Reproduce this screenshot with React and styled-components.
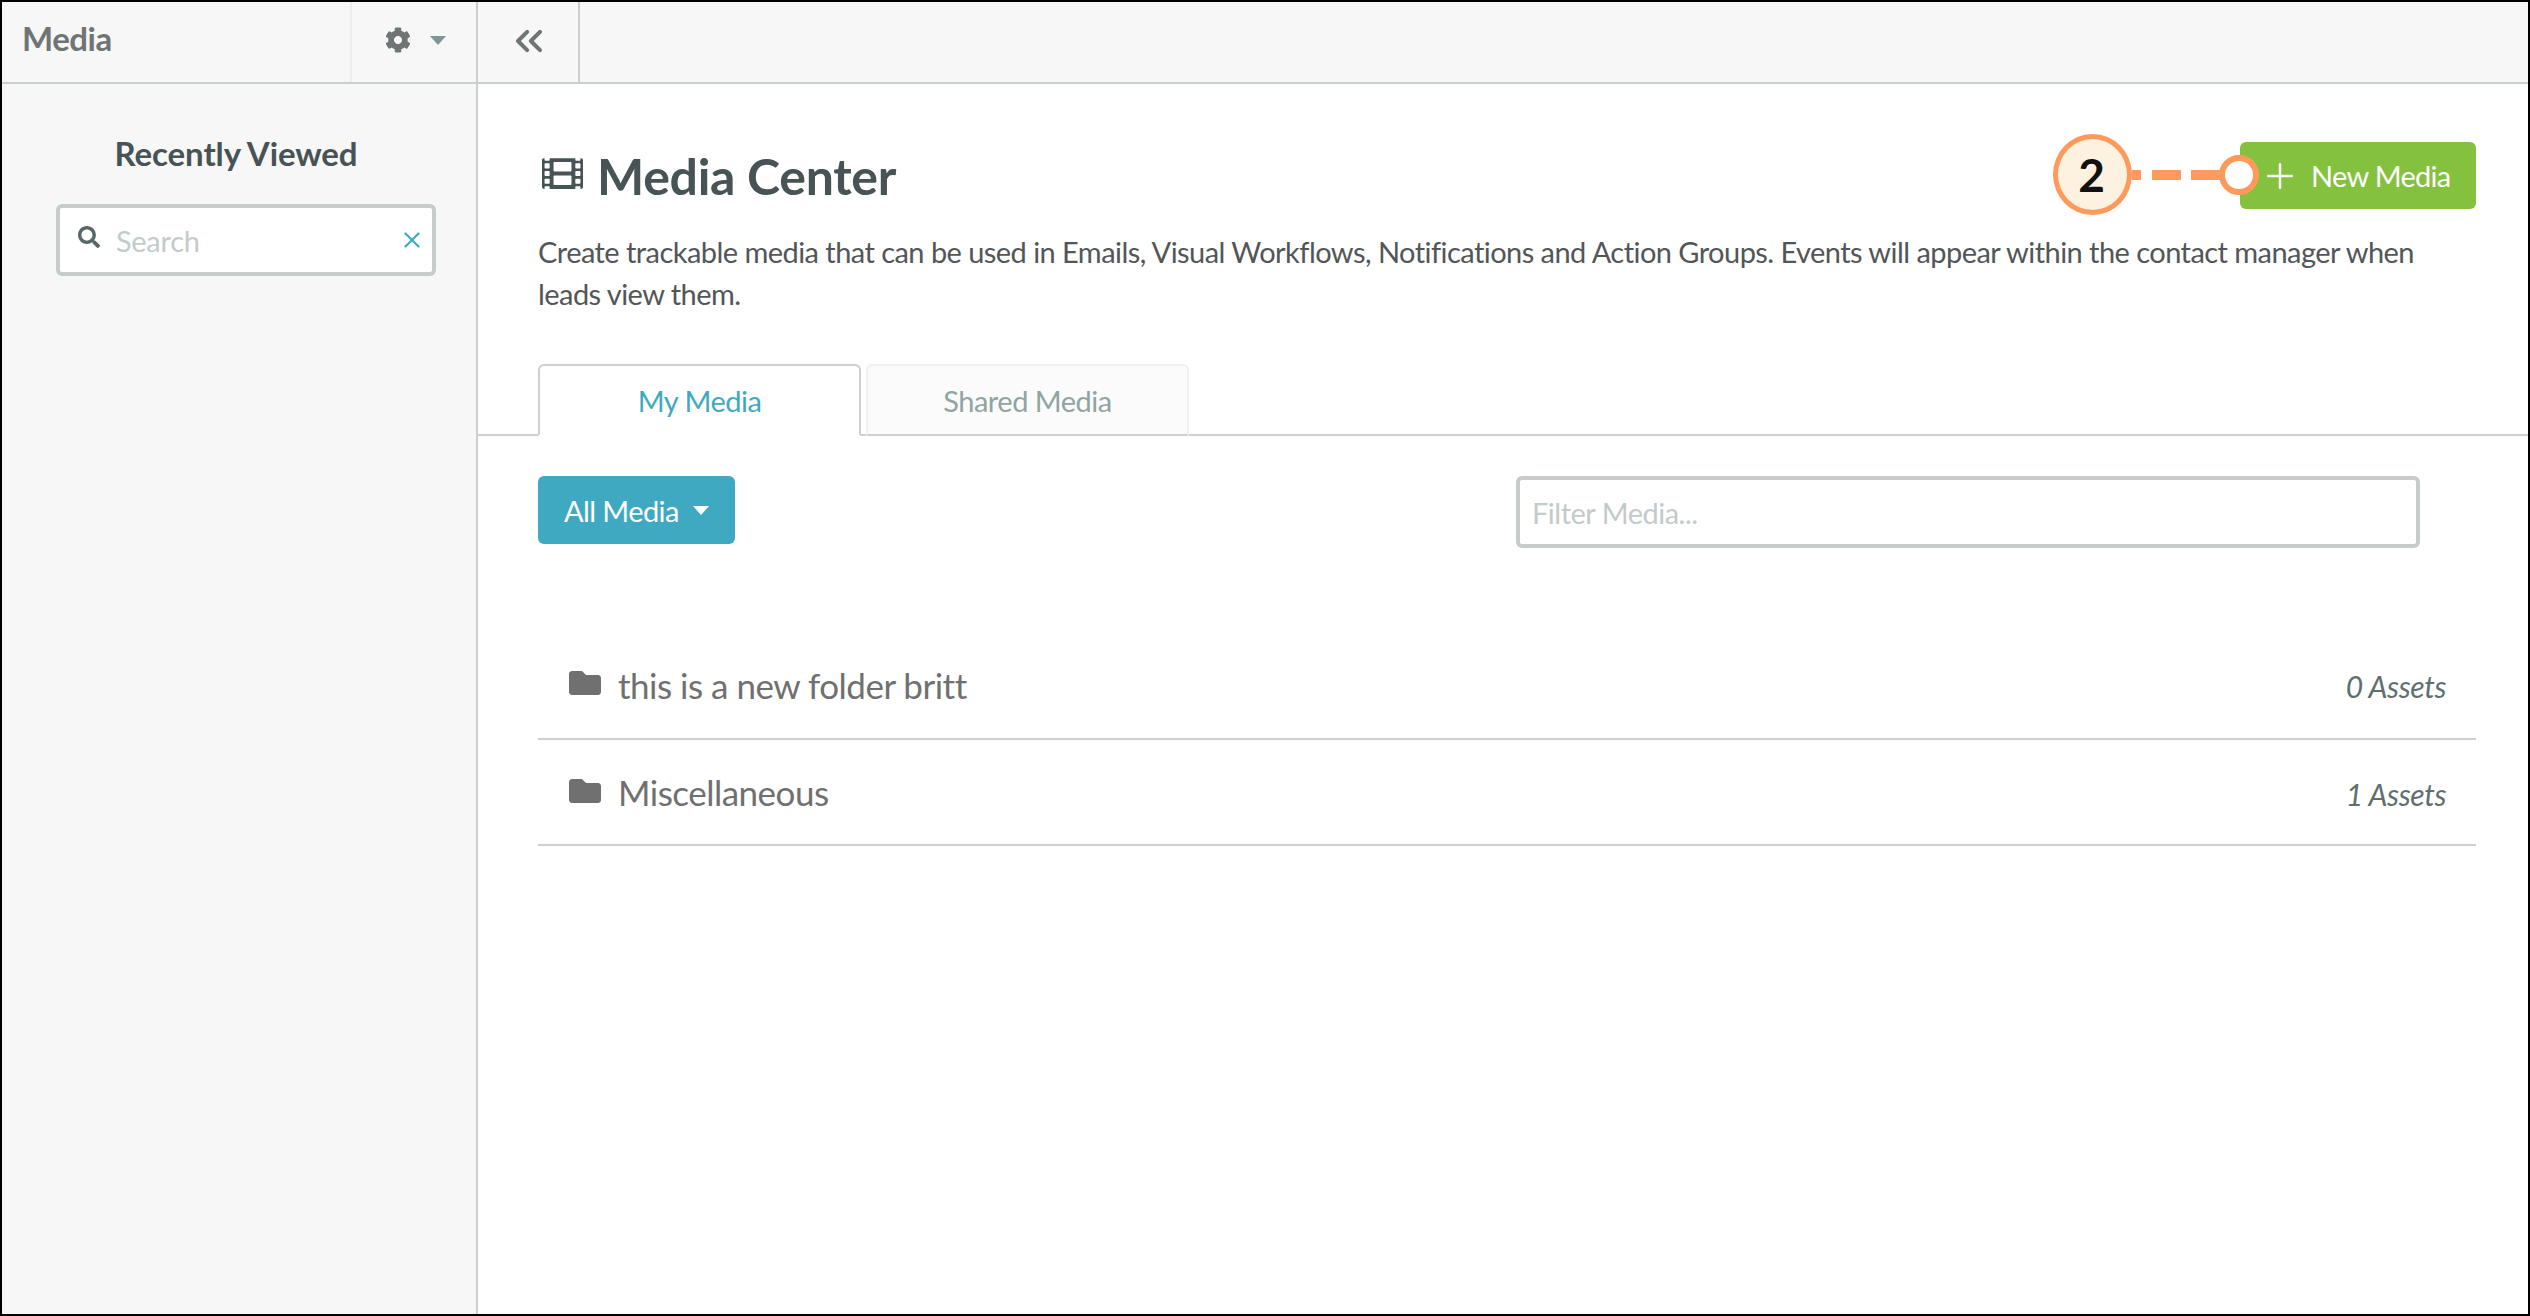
import React from 'react';
import styled, { createGlobalStyle } from 'styled-components';
import { FaCog, FaFilm, FaFolder, FaSearch } from 'react-icons/fa';
import { ChevronsLeft, Plus, X } from 'lucide-react';

const FOLDERS = [
  { name: 'this is a new folder britt', count: 0 },
  { name: 'Miscellaneous', count: 1 }
];

const App = () => (
  <>
    <GlobalStyle />
    <Frame>
      <TopBar>
        <SideHead>
          <HeadTitle>Media</HeadTitle>
          <GearButton>
            <FaCog size={26} />
            <Caret $color="#7f9694" />
          </GearButton>
        </SideHead>
        <CollapseButton>
          <ChevronsLeft size={44} strokeWidth={2.2} />
        </CollapseButton>
      </TopBar>

      <Body>
        <Sidebar>
          <SideTitle>Recently Viewed</SideTitle>
          <SearchBox>
            <SearchIcon size={22} />
            <SearchText>Search</SearchText>
            <ClearIcon size={26} strokeWidth={2} />
          </SearchBox>
        </Sidebar>

        <Main>
          <Header>
            <HeadRow>
              <PageTitle>
                <FaFilm size={41} />
                <span>Media Center</span>
              </PageTitle>
              <NewButton>
                <Plus size={40} strokeWidth={1.5} />
                New Media
                <Callout>
                  <CalloutNumber>2</CalloutNumber>
                  <CalloutLine />
                  <CalloutDot />
                </Callout>
              </NewButton>
            </HeadRow>
            <Description>
              Create trackable media that can be used in Emails, Visual Workflows, Notifications and Action
              Groups. Events will appear within the contact manager when leads view them.
            </Description>
          </Header>

          <Tabs>
            <Tab $active>My Media</Tab>
            <Tab>Shared Media</Tab>
          </Tabs>

          <Content>
            <Toolbar>
              <FilterButton>
                All Media
                <Caret $color="#fff" />
              </FilterButton>
              <FilterInput>Filter Media...</FilterInput>
            </Toolbar>

            <FolderList>
              {FOLDERS.map((folder) => (
                <FolderRow key={folder.name}>
                  <FolderName>
                    <FaFolder size={32} />
                    {folder.name}
                  </FolderName>
                  <AssetCount>{folder.count} Assets</AssetCount>
                </FolderRow>
              ))}
            </FolderList>
          </Content>
        </Main>
      </Body>
    </Frame>
  </>
);

export default App;

const GlobalStyle = createGlobalStyle`
  html, body {
    margin: 0;
    padding: 0;
    background: #fff;
  }

  * {
    box-sizing: border-box;
  }

  body {
    font-family: Lato, "Liberation Sans", sans-serif;
  }
`;

const Frame = styled.div`
  display: flex;
  flex-direction: column;
  height: 100vh;
  border: 2px solid #000;
  overflow: hidden;
`;

const TopBar = styled.div`
  display: flex;
  flex: none;
  height: 82px;
  background: #f7f7f7;
  border-bottom: 2px solid #c9cfce;
`;

const SideHead = styled.div`
  display: flex;
  align-items: stretch;
  justify-content: space-between;
  width: 476px;
  border-right: 2px solid #c9cfce;
`;

const HeadTitle = styled.div`
  padding: 16px 0 0 20px;
  font-size: 33px;
  font-weight: 700;
  letter-spacing: -0.5px;
  line-height: 40px;
  color: #6f7475;
`;

const GearButton = styled.div`
  display: flex;
  align-items: center;
  gap: 19px;
  width: 126px;
  padding: 0 0 4px 33px;
  color: #6f7475;
  border-left: 2px solid #eceded;
`;

const Caret = styled.span`
  width: 0;
  height: 0;
  border-left: 8px solid transparent;
  border-right: 8px solid transparent;
  border-top: 9px solid ${(p) => p.$color};
`;

const CollapseButton = styled.div`
  display: flex;
  align-items: center;
  justify-content: center;
  width: 102px;
  padding: 0 0 2px 2px;
  color: #6f7475;
  border-right: 2px solid #c9cfce;
`;

const Body = styled.div`
  display: flex;
  flex: 1;
  min-height: 0;
`;

const Sidebar = styled.aside`
  flex: none;
  width: 476px;
  background: #f7f7f7;
  border-right: 2px solid #c9cfce;
  padding-top: 50px;
`;

const SideTitle = styled.h2`
  margin: 0 0 32px;
  padding-right: 6px;
  text-align: center;
  font-size: 33px;
  font-weight: 700;
  letter-spacing: -0.1px;
  line-height: 38px;
  color: #475355;
`;

const SearchBox = styled.div`
  display: flex;
  align-items: center;
  width: 380px;
  height: 72px;
  margin-left: 54px;
  padding: 0 7px 0 18px;
  background: #fff;
  border: 4px solid #c5cccb;
  border-radius: 6px;
`;

const SearchIcon = styled(FaSearch)`
  color: #566768;
  margin-bottom: 6px;
`;

const SearchText = styled.span`
  flex: 1;
  margin-left: 16px;
  font-size: 29px;
  letter-spacing: -0.3px;
  color: #c3cbca;
`;

const ClearIcon = styled(X)`
  color: #3fa9c2;
`;

const Main = styled.main`
  flex: 1;
  min-width: 0;
  background: #fff;
`;

const Header = styled.div`
  padding: 58px 52px 0 60px;
`;

const HeadRow = styled.div`
  display: flex;
  align-items: flex-start;
  justify-content: space-between;
`;

const PageTitle = styled.h1`
  display: flex;
  align-items: center;
  gap: 14px;
  height: 67px;
  margin: 0;
  padding-left: 4px;
  font-size: 50px;
  font-weight: 700;
  letter-spacing: -0.3px;
  line-height: 60px;
  color: #475355;

  svg {
    margin-bottom: 4px;
  }

  span {
    padding-top: 1px;
  }
`;

const NewButton = styled.div`
  position: relative;
  display: flex;
  align-items: center;
  gap: 11px;
  width: 236px;
  height: 67px;
  padding-left: 20px;
  font-size: 29px;
  letter-spacing: -0.7px;
  color: #fff;
  background: #84c13f;
  border-radius: 6px;
`;

const Callout = styled.div`
  position: absolute;
  top: -8px;
  left: -187px;
  display: flex;
  align-items: center;
`;

const CalloutNumber = styled.div`
  display: flex;
  align-items: center;
  justify-content: center;
  flex: none;
  width: 79px;
  height: 81px;
  padding-right: 2px;
  font-size: 46px;
  font-weight: 700;
  letter-spacing: 0;
  color: #111;
  background: #fdf1e0;
  border: 5px solid #ff9a5c;
  border-radius: 50%;
`;

const CalloutLine = styled.div`
  width: 89px;
  height: 10px;
  background: linear-gradient(
    90deg,
    #ff9a5c 0 9px,
    transparent 9px 20px,
    #ff9a5c 20px 49px,
    transparent 49px 59px,
    #ff9a5c 59px 89px
  );
`;

const CalloutDot = styled.div`
  flex: none;
  width: 40px;
  height: 40px;
  margin-left: -2px;
  background: #fff;
  border: 6px solid #ff9a5c;
  border-radius: 50%;
`;

const Description = styled.p`
  margin: 22px 0 0;
  width: 1900px;
  font-size: 29px;
  letter-spacing: -0.55px;
  line-height: 42px;
  color: #535658;
`;

const Tabs = styled.div`
  display: flex;
  gap: 5px;
  height: 72px;
  margin-top: 49px;
  padding-left: 60px;
  border-bottom: 2px solid #cfcfcf;
`;

const Tab = styled.div`
  display: flex;
  align-items: center;
  justify-content: center;
  width: 323px;
  height: 72px;
  font-size: 29px;
  letter-spacing: -0.5px;
  color: ${(p) => (p.$active ? '#3fa9c2' : '#90a4a2')};
  background: ${(p) => (p.$active ? '#fff' : '#fbfbfb')};
  border: 2px solid ${(p) => (p.$active ? '#cfcfcf' : '#f0f0f0')};
  border-bottom-color: ${(p) => (p.$active ? '#fff' : '#cfcfcf')};
  border-radius: 6px 6px 0 0;
`;

const Content = styled.div`
  padding: 40px 52px 0 60px;
`;

const Toolbar = styled.div`
  display: flex;
  align-items: flex-start;
  justify-content: space-between;
  padding-right: 56px;
`;

const FilterButton = styled.div`
  display: flex;
  align-items: center;
  gap: 14px;
  height: 68px;
  padding: 0 26px;
  font-size: 29px;
  letter-spacing: -0.6px;
  color: #fff;
  background: #3fa9c2;
  border-radius: 6px;
`;

const FilterInput = styled.div`
  display: flex;
  align-items: center;
  width: 904px;
  height: 72px;
  padding-left: 12px;
  font-size: 29px;
  letter-spacing: -0.5px;
  color: #c3cbca;
  background: #fff;
  border: 4px solid #c5cccb;
  border-radius: 6px;
`;

const FolderList = styled.div`
  margin-top: 86px;
`;

const FolderRow = styled.div`
  display: flex;
  align-items: center;
  justify-content: space-between;
  height: 106px;
  padding: 0 30px 0 31px;
  border-bottom: 2px solid #cfcfcf;

  &:first-child {
    padding-bottom: 3px;
  }
`;

const FolderName = styled.div`
  display: flex;
  align-items: center;
  gap: 17px;
  font-size: 35px;
  letter-spacing: -0.5px;
  color: #707070;

  svg {
    margin-bottom: 3px;
  }
`;

const AssetCount = styled.div`
  margin-top: 3px;
  font-size: 30px;
  font-style: italic;
  letter-spacing: -0.4px;
  color: #5f6f6f;
`;
